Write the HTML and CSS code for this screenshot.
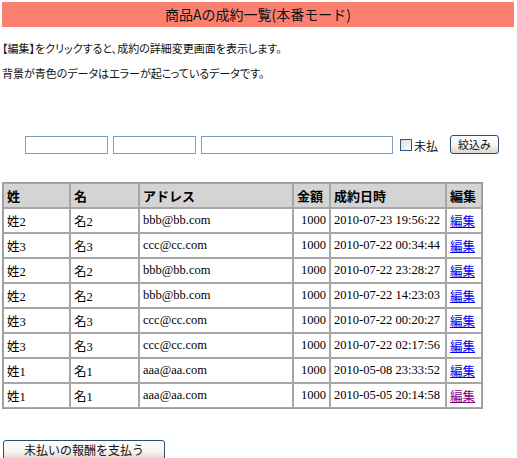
FILE: index.html
```html
<!DOCTYPE html>
<html lang="ja">
<head>
<meta charset="utf-8">
<title>商品Aの成約一覧</title>
<link rel="stylesheet" href="styles.css">
</head>
<body>
<div class="title">商品Aの成約一覧(本番モード)</div>
<p class="note">【編集】をクリックすると、成約の詳細変更画面を表示します。</p>
<p class="note note2">背景が青色のデータはエラーが起こっているデータです。</p>
<form class="filter">
  <input class="field f1" type="text">
  <input class="field f2" type="text">
  <input class="field f3" type="text">
  <label class="unpaid"><input class="check" type="checkbox">未払</label>
  <button class="btn narrow" type="button">絞込み</button>
</form>
<table class="list">
  <thead>
    <tr>
      <th class="c1">姓</th><th class="c2">名</th><th class="c3">アドレス</th><th class="c4">金額</th><th class="c5">成約日時</th><th class="c6">編集</th>
    </tr>
  </thead>
  <tbody>
    <tr><td>姓2</td><td>名2</td><td>bbb@bb.com</td><td class="num">1000</td><td>2010-07-23 19:56:22</td><td><a href="#e1">編集</a></td></tr>
    <tr><td>姓3</td><td>名3</td><td>ccc@cc.com</td><td class="num">1000</td><td>2010-07-22 00:34:44</td><td><a href="#e2">編集</a></td></tr>
    <tr><td>姓2</td><td>名2</td><td>bbb@bb.com</td><td class="num">1000</td><td>2010-07-22 23:28:27</td><td><a href="#e3">編集</a></td></tr>
    <tr><td>姓2</td><td>名2</td><td>bbb@bb.com</td><td class="num">1000</td><td>2010-07-22 14:23:03</td><td><a href="#e4">編集</a></td></tr>
    <tr><td>姓3</td><td>名3</td><td>ccc@cc.com</td><td class="num">1000</td><td>2010-07-22 00:20:27</td><td><a href="#e5">編集</a></td></tr>
    <tr><td>姓3</td><td>名3</td><td>ccc@cc.com</td><td class="num">1000</td><td>2010-07-22 02:17:56</td><td><a href="#e6">編集</a></td></tr>
    <tr><td>姓1</td><td>名1</td><td>aaa@aa.com</td><td class="num">1000</td><td>2010-05-08 23:33:52</td><td><a href="#e7">編集</a></td></tr>
    <tr><td>姓1</td><td>名1</td><td>aaa@aa.com</td><td class="num">1000</td><td>2010-05-05 20:14:58</td><td><a class="visited" href="#e8">編集</a></td></tr>
  </tbody>
</table>
<div class="actions">
  <button class="btn wide" type="button">未払いの報酬を支払う</button>
</div>
</body>
</html>
```

FILE: styles.css
```css
html, body {
  background: #ffffff;
}
body {
  margin: 2px;
  font-family: "Noto Sans CJK JP", sans-serif;
  color: #000;
}
.title {
  height: 25px;
  line-height: 25px;
  width: 512px;
  background: #fb8070;
  text-align: center;
  font-size: 14px;
  color: #111;
}
.note {
  margin: 14px 0 0 0;
  height: 14px;
  line-height: 14px;
  font-size: 11px;
  font-feature-settings: "palt";
  color: #111;
}
.note2 {
  margin-top: 11px;
}
.filter {
  margin: 55px 0 0 23px;
  display: flex;
  align-items: center;
  height: 20px;
}
.field {
  box-sizing: border-box;
  height: 18px;
  margin: 0 5px 0 0;
  padding: 1px 2px;
  border: 1px solid #7f9db9;
  background: #fff;
  font-size: 12px;
}
.f1, .f2 {
  width: 83px;
}
.f3 {
  width: 192px;
  margin-right: 7px;
}
.unpaid {
  display: flex;
  align-items: center;
  font-size: 12px;
  color: #111;
  margin-right: 12px;
}
.check {
  appearance: none;
  -webkit-appearance: none;
  box-sizing: border-box;
  width: 12px;
  height: 12px;
  margin: 0 2px 0 0;
  border: 1px solid #2a5a8a;
  background: linear-gradient(135deg, #dcdcd6, #ffffff);
}
.btn {
  box-sizing: border-box;
  border: 1px solid #2b4c74;
  border-radius: 3px;
  background: linear-gradient(#ffffff 0%, #f4f3ee 60%, #d9d6cc 100%);
  font-family: "Noto Sans CJK JP", sans-serif;
  font-size: 11px;
  color: #111;
  padding: 0;
}
.narrow {
  width: 49px;
  height: 19px;
  margin-top: -2px;
}
.list {
  margin-top: 27px;
  border-collapse: separate;
  border-spacing: 0;
  border: 1px solid #9a9a9a;
  table-layout: fixed;
  width: 481px;
  font-family: "Liberation Serif", "Noto Sans CJK JP", serif;
  font-size: 12.5px;
}
.list th, .list td {
  box-sizing: border-box;
  border: 1px solid #a6a6a6;
  height: 25px;
  padding: 0 3px;
  text-align: left;
  white-space: nowrap;
  overflow: hidden;
}
.list th {
  background: #d4d4d4;
  font-family: "Noto Sans CJK JP", sans-serif;
  font-weight: bold;
  font-size: 13px;
}
.list td {
  font-size: 12.5px;
}
.c1 { width: 67px; }
.c2 { width: 69px; }
.c3 { width: 154px; }
.c4 { width: 37px; }
.c5 { width: 116px; }
.c6 { width: 36px; }
.list .num {
  text-align: right;
}
.list a {
  color: #0000ee;
  font-family: "Noto Sans CJK JP", sans-serif;
  text-decoration: underline;
}
.list a.visited {
  color: #800080;
}
.actions {
  margin-top: 27px;
  padding-left: 1px;
}
.wide {
  width: 162px;
  height: 20px;
  font-size: 12px;
}
```
